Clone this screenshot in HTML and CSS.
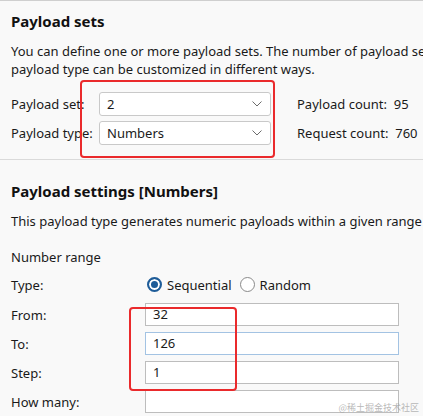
FILE: index.html
```html
<!DOCTYPE html>
<html lang="en">
<head>
<meta charset="utf-8">
<title>Payloads</title>
<link rel="stylesheet" href="styles.css">
</head>
<body>
<div class="page">
  <section class="sets">
    <h2 class="title">Payload sets</h2>
    <p class="desc">You can define one or more payload sets. The number of payload sets depends on the attack type defined in the Positions tab. Various payload types are available for each payload set, and each<br>payload type can be customized in different ways.</p>
    <div class="set-grid">
      <span class="label">Payload set:</span>
      <div class="select"><span>2</span><svg class="chev" viewBox="0 0 10 6" width="10" height="6"><path d="M0.5 0.5 L5 5 L9.5 0.5" fill="none" stroke="#6b6b6b" stroke-width="1"/></svg></div>
      <span class="count">Payload count:&nbsp; 95</span>
      <span class="label">Payload type:</span>
      <div class="select"><span>Numbers</span><svg class="chev" viewBox="0 0 10 6" width="10" height="6"><path d="M0.5 0.5 L5 5 L9.5 0.5" fill="none" stroke="#6b6b6b" stroke-width="1"/></svg></div>
      <span class="count">Request count:&nbsp; 760</span>
    </div>
  </section>
  <section class="settings">
    <h2 class="title">Payload settings [Numbers]</h2>
    <p class="desc">This payload type generates numeric payloads within a given range and in a specified format.</p>
    <p class="sub">Number range</p>
    <div class="range-grid">
      <span class="label">Type:</span>
      <div class="radios">
        <label class="radio"><span class="dot on"></span>Sequential</label>
        <label class="radio"><span class="dot"></span>Random</label>
      </div>
      <span class="label">From:</span>
      <div class="field">32</div>
      <span class="label">To:</span>
      <div class="field focus">126</div>
      <span class="label">Step:</span>
      <div class="field">1</div>
      <span class="label">How many:</span>
      <div class="field"></div>
    </div>
  </section>
  <div class="mark mark-sets"></div>
  <div class="mark mark-range"></div>
  <div class="watermark">@稀土掘金技术社区</div>
</div>
</body>
</html>
```
FILE: styles.css
```css
html, body {
  margin: 0;
  padding: 0;
  background: #f9f9f9;
  overflow: hidden;
}
body {
  font-family: "Noto Sans", "Open Sans", sans-serif;
  font-size: 13px;
  color: #1a1a1a;
}
.page {
  position: relative;
  width: 423px;
  height: 416px;
  overflow: hidden;
  border-top: 1px solid #cfcfcf;
  box-sizing: border-box;
}
.sets {
  padding: 9px 0 14px 11px;
  border-bottom: 1px solid #dadada;
}
.title {
  margin: 0;
  font-size: 15px;
  font-weight: 700;
  line-height: 22px;
  color: #111;
}
.desc {
  margin: 10px 0 0;
  line-height: 18px;
  white-space: nowrap;
}
.set-grid {
  display: grid;
  grid-template-columns: 88px 172px auto;
  grid-auto-rows: 24px;
  row-gap: 5px;
  align-items: center;
  margin-top: 14px;
}
.label {
  line-height: 18px;
}
.select {
  height: 24px;
  box-sizing: border-box;
  border: 1px solid #c9c9c9;
  border-radius: 3px;
  background: #fff;
  display: flex;
  align-items: center;
  justify-content: space-between;
  padding: 0 8px 0 7px;
}
.chev {
  display: block;
}
.count {
  margin-left: 26px;
  white-space: nowrap;
}
.settings {
  padding: 20px 0 0 11px;
}
.settings .desc {
  margin-top: 10px;
}
.sub {
  margin: 18px 0 0;
  line-height: 18px;
}
.range-grid {
  display: grid;
  grid-template-columns: 134px 254px;
  grid-template-rows: 25px;
  grid-auto-rows: 23px;
  row-gap: 6px;
  align-items: center;
  margin-top: 6px;
}
.radios {
  display: flex;
  align-items: center;
  gap: 6px;
}
.radio {
  display: flex;
  align-items: center;
  gap: 5px;
}
.dot {
  width: 15px;
  height: 15px;
  box-sizing: border-box;
  border-radius: 50%;
  border: 1px solid #8a8a8a;
  background: #fff;
  margin-left: 2px;
}
.dot.on {
  border: 2px solid #1e5c98;
  box-shadow: inset 0 0 0 2px #fff;
  background: #1e5c98;
}
.field {
  height: 23px;
  box-sizing: border-box;
  border: 1px solid #bdbdbd;
  background: #fff;
  padding: 0 7px;
  line-height: 21px;
}
.field.focus {
  border-color: #a3c3e3;
}
.mark {
  position: absolute;
  border: 2.5px solid #ea2a2c;
  border-radius: 4px;
  box-sizing: border-box;
}
.mark-sets {
  left: 80px;
  top: 79px;
  width: 195px;
  height: 78px;
}
.mark-range {
  left: 129px;
  top: 306px;
  width: 108px;
  height: 84px;
}
.watermark {
  position: absolute;
  right: 4px;
  bottom: 2px;
  font-family: "Noto Sans CJK SC", sans-serif;
  font-size: 9px;
  color: rgba(160, 160, 160, 0.75);
}
```
